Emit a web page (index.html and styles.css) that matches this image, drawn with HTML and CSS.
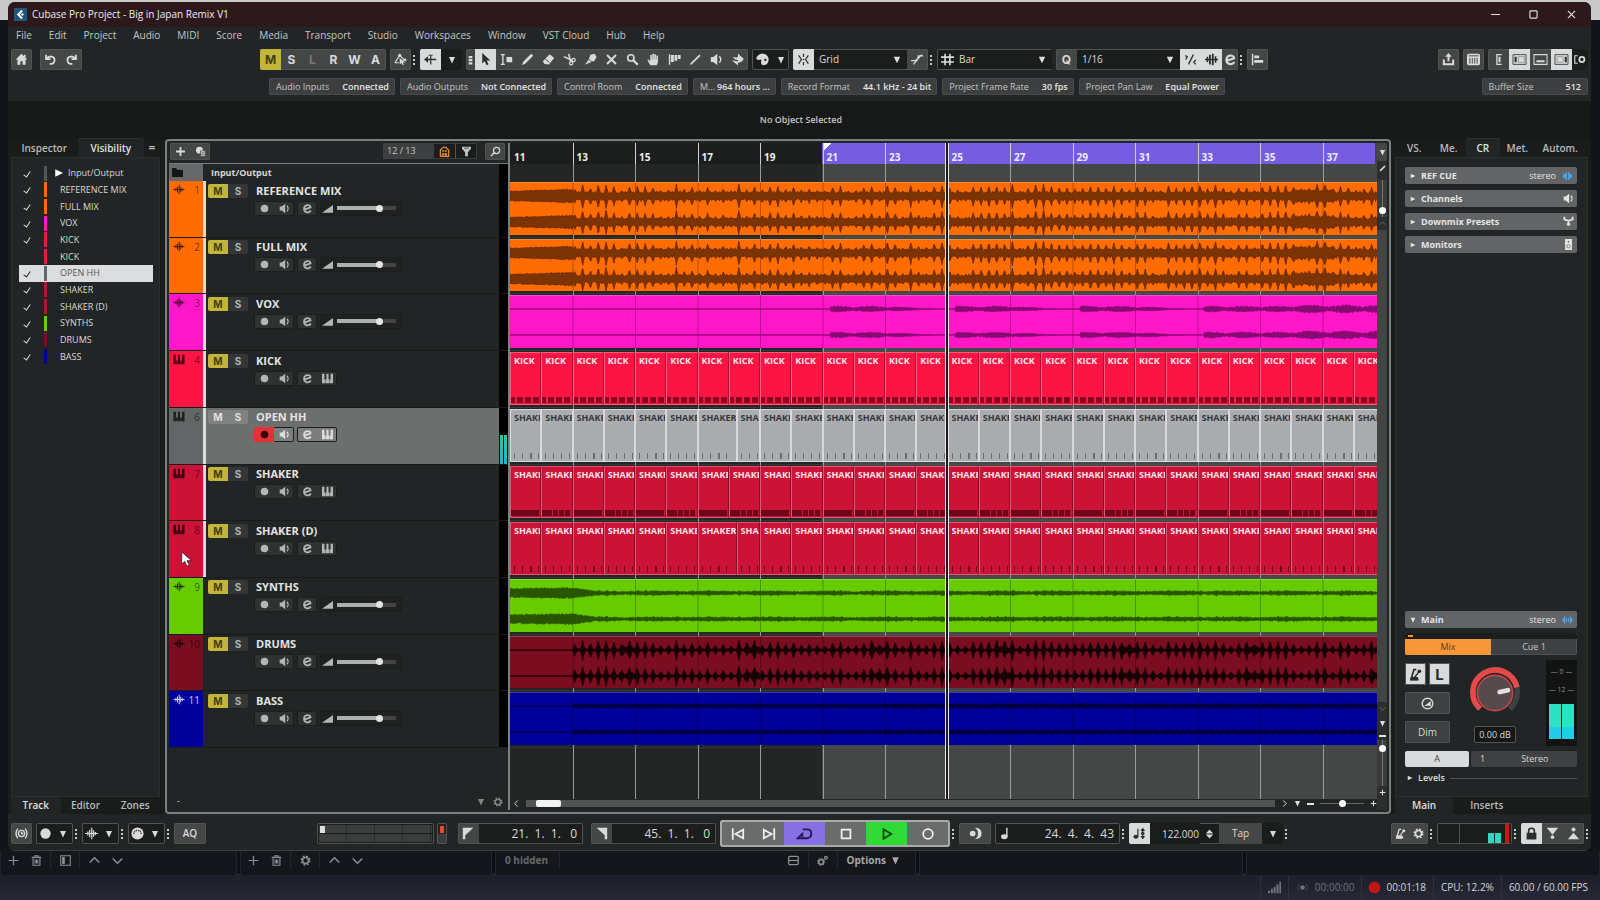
FILE: index.html
```html
<!DOCTYPE html>
<html lang="en">
<head>
<meta charset="utf-8">
<title>Cubase Pro Project - Big in Japan Remix V1</title>
<link rel="stylesheet" href="styles.css">
</head>
<body>
<svg class="sprite" aria-hidden="true">
  <symbol id="home" viewBox="0 0 16 16"><path d="M8 1 0.8 8H3v6.5h3.6V10h2.8v4.500H13V8h2.200L13 5.800V2.300h-2v1.600z"/></symbol>
  <symbol id="undo" viewBox="0 0 16 16"><path d="M2.500 2v5.500H8M3 7c3-4 10-3.500 10 1.500 0 3-2 5-6 5" fill="none" stroke="currentColor" stroke-width="2.200"/></symbol>
  <symbol id="redo" viewBox="0 0 16 16"><path d="M13.500 2v5.500H8M13 7c-3-4-10-3.500-10 1.500 0 3 2 5 6 5" fill="none" stroke="currentColor" stroke-width="2.200"/></symbol>
  <symbol id="autom" viewBox="0 0 16 16"><path d="M1 12 7 3l6 6M1 12h5" fill="none" stroke="currentColor" stroke-width="1.500"/><path d="M7 6v8l2.200-1.800 1.500 3 1.500-.8-1.400-2.700H14z"/><circle cx="7" cy="3" r="2"/><circle cx="13.500" cy="8.500" r="1.800"/></symbol>
  <symbol id="scroll" viewBox="0 0 16 16"><path d="M7.500 2h1.500v12H7.500zM0 8l5-4v3h10v2H5v3zM5.500 2h5.500v1H5.500z"/></symbol>
  <symbol id="handle" viewBox="0 0 8 16"><path d="M1 1.500h6v3.500h-6zM1 6.500h6v3.500h-6zM1 11.500h6V15H1z"/></symbol>
  <symbol id="pointer" viewBox="0 0 16 16"><path d="M4 0v13l3-2.800L9.300 15l2.400-1.100L9.500 9.200H14z"/></symbol>
  <symbol id="range" viewBox="0 0 16 16"><path d="M1 2h5M1 14h5M3.500 2v12" fill="none" stroke="currentColor" stroke-width="1.700"/><path d="M8 5h7v6.500H8z"/></symbol>
  <symbol id="pencil" viewBox="0 0 16 16"><path d="M12.500 1 15 3.500 5.500 13 1 15l2-4.500z"/></symbol>
  <symbol id="eraser" viewBox="0 0 16 16"><path d="M9.500 1.500 15 6l-6.500 8-5.500-.5L1 10z"/><path d="m4 7.500 5 4" stroke="#454747" stroke-width="1.200"/></symbol>
  <symbol id="scissors" viewBox="0 0 16 16"><path d="M1 4.500 11 9M7 1l2.500 10" fill="none" stroke="currentColor" stroke-width="1.900"/><circle cx="13" cy="8.500" r="2" fill="none" stroke="currentColor" stroke-width="1.500"/><circle cx="10" cy="12.700" r="2" fill="none" stroke="currentColor" stroke-width="1.500"/></symbol>
  <symbol id="glue" viewBox="0 0 16 16"><path d="M1 14.500 6 8l3 3z"/><path d="M6 7 8 2l5-1 2.500 4-3 5-3 .5z"/></symbol>
  <symbol id="cross" viewBox="0 0 16 16"><path d="m2.500 2.500 11 11m0-11-11 11" stroke="currentColor" stroke-width="2.500"/></symbol>
  <symbol id="zoom" viewBox="0 0 16 16"><circle cx="6" cy="6" r="3.800" fill="none" stroke="currentColor" stroke-width="2"/><path d="m9 9 5.500 5.500" stroke="currentColor" stroke-width="2.700"/></symbol>
  <symbol id="hand" viewBox="0 0 16 16"><path d="M4 15 .5 9l1.200-1.200L4 10V2.500h2V8h.5V1h2v7H9V1.500h2V8h.5V3h2v8L12 15z"/></symbol>
  <symbol id="comp" viewBox="0 0 16 16"><path d="M1 1.500h1.800v13H1zM3.600 2.500h3.600V11H3.600zM8 2.500h3.400v7H8zM12.200 2.500h3.300v5h-3.300z"/></symbol>
  <symbol id="line" viewBox="0 0 16 16"><path d="M2 14 13.500 2.500" stroke="currentColor" stroke-width="2.200"/></symbol>
  <symbol id="speaker" viewBox="0 0 16 16"><path d="M1 5h3l5-4v14l-5-4H1z"/><path d="M11.500 4q3.500 4 0 8" fill="none" stroke="currentColor" stroke-width="1.700"/></symbol>
  <symbol id="scrub" viewBox="0 0 16 16"><path d="M1 9 8.500 15.500v-3.500q6-1 7-5l-7-6.500v4q-1 2-6.500 0l3 3.500 3.500.5v2z"/></symbol>
  <symbol id="palette" viewBox="0 0 16 16"><path d="M8.500 1C4 1 .5 3.500.5 7.500c2 1.500 4 1 5 .5 1.500 0 1 1 .8 2.500C6 13 7 15 9.500 15c3.500 0 6-3 6-7s-3-7-7-7z"/><circle cx="11.500" cy="8.500" r="1.400" fill="#1b1d1d"/></symbol>
  <symbol id="snap" viewBox="0 0 16 16"><path d="M8 1v4M8 11v4M2 3l3.500 5L2 13M14 3l-3.500 5 3.500 5M7 8h2" fill="none" stroke="currentColor" stroke-width="1.500"/></symbol>
  <symbol id="curve" viewBox="0 0 16 16"><path d="M0 9.500h5q4-1 4-6h6M3 14 13 2" fill="none" stroke="currentColor" stroke-width="1.600"/></symbol>
  <symbol id="grid" viewBox="0 0 16 16"><path d="M5 1v14M11 1v14M0 5h16M0 11h16" stroke="currentColor" stroke-width="2"/></symbol>
  <symbol id="nq" viewBox="0 0 16 16"><path d="M11.500 2 5.500 14M1.500 3l2.500 1.500L2 8M14.500 8.500 12 11l2.500 3" fill="none" stroke="currentColor" stroke-width="1.600"/></symbol>
  <symbol id="wave" viewBox="0 0 16 16"><path d="M0 8h16M3.500 5.500v5M5.800 3.500v9M8.300 1v14M10.500 4v8M12.700 6v4" stroke="currentColor" stroke-width="1.500"/></symbol>
  <symbol id="beats" viewBox="0 0 16 16"><path d="M0 7h2V4.500h2V7h1V2h2.200v5h1.300V1h2.200v6H12V4h2v3h2v2h-2v3h-2V9h-1.300v6H8.500V9H7.200v5H5V9H4v2.500H2V9H0z"/></symbol>
  <symbol id="edit" viewBox="0 0 16 16"><path d="M3.500 9.500 12.500 6.500C12 1.500 3 2 3 8.500c0 6 7.500 6.500 9.800 2.500" fill="none" stroke="currentColor" stroke-width="2.600"/></symbol>
  <symbol id="align" viewBox="0 0 16 16"><path d="M1 1h1.800v14H1zM4 3h6v3.500H4zM4 8.500h11V12H4z"/></symbol>
  <symbol id="share" viewBox="0 0 16 16"><path d="M8 0l4 4.500H9.200V10H6.800V4.500H4zM1 8h2.500v4.500h9V8H15v7H1z"/></symbol>
  <symbol id="mixer" viewBox="0 0 16 16"><rect y="1" width="16" height="14" rx="2"/><path d="M2 3.500h12M3.500 6v7M6.500 6v7M9.500 6v7M12.500 6v7" stroke="#454747" stroke-width="1.200"/></symbol>
  <symbol id="zl" viewBox="0 0 18 16"><path d="M13 2H7v12h6" fill="none" stroke="currentColor" stroke-width="1.600"/><path d="M9 4.500h2.500v7H9z"/></symbol>
  <symbol id="zleft" viewBox="0 0 18 16"><path d="M1 2h16v12H1z" fill="none" stroke="currentColor"/><path d="M3 4.500h2.500v7H3z"/><path d="M7.500 4.500H15v7H7.500z" fill="none" stroke="currentColor" opacity=".4"/></symbol>
  <symbol id="zbottom" viewBox="0 0 18 16"><path d="M1 2h16v12H1z" fill="none" stroke="currentColor" stroke-width="1.300"/><path d="M4 9h10v2.500H4z"/></symbol>
  <symbol id="zright" viewBox="0 0 18 16"><path d="M1 2h16v12H1z" fill="none" stroke="currentColor"/><path d="M13 4.500h2.500v7H13z"/><path d="M3.500 4.500h7.500v7H3.500z" fill="none" stroke="currentColor" opacity=".4"/></symbol>
  <symbol id="zset" viewBox="0 0 16 16"><path d="M5 3H1v10h4" fill="none" stroke="currentColor" stroke-width="1.500"/><circle cx="10.500" cy="8" r="3.400" fill="none" stroke="currentColor" stroke-width="2.400"/></symbol>
  <symbol id="plus" viewBox="0 0 16 16"><path d="M8 1.500v13M1.500 8h13" stroke="currentColor" stroke-width="2.600"/></symbol>
  <symbol id="thinplus" viewBox="0 0 16 16"><path d="M8 1v14M1 8h14" stroke="currentColor" stroke-width="1.700"/></symbol>
  <symbol id="preset" viewBox="0 0 16 16"><circle cx="6.500" cy="6" r="5"/><path d="M8 7h7v8H8z" stroke="#3d3f3f"/><path d="M9 10h5M9 12.500h5" stroke="#3d3f3f"/></symbol>
  <symbol id="vis" viewBox="0 0 16 16"><path d="M2 15V6l4-4h4l4 4v9z" fill="none" stroke="currentColor" stroke-width="1.800"/><path d="M4.500 6h3v2.500h-3zM8.500 6h3v2.500h-3zM4.500 10h3v4h-3zM8.500 10h3v4h-3z"/></symbol>
  <symbol id="filter" viewBox="0 0 16 16"><path d="M1.500 1h13v3L10 9v6H6V9L1.500 4z"/><path d="M4.500 3.200h7" stroke="#1b1d1d"/></symbol>
  <symbol id="search" viewBox="0 0 16 16"><circle cx="9.500" cy="6.500" r="4.500" fill="none" stroke="currentColor" stroke-width="1.800"/><path d="M6.500 9.500 1.500 14.500" stroke="currentColor" stroke-width="2"/></symbol>
  <symbol id="folder" viewBox="0 0 16 16"><path d="M0 3q0-1.500 1.500-1.500H6L7.500 4h7Q16 4 16 5.500v9H0z"/></symbol>
  <symbol id="keys" viewBox="0 0 16 16"><path d="M0 1h3.500v8.500H5V15H0zM5.600 9.500H6.500V1h3v8.500h.9V15H5.600zM16 1h-3.500v8.500H11V15h5z"/></symbol>
  <symbol id="dot" viewBox="0 0 16 16"><circle cx="8" cy="8" r="5.500"/></symbol>
  <symbol id="ramp" viewBox="0 0 16 16"><path d="M0 14 16 3v11z"/></symbol>
  <symbol id="down" viewBox="0 0 16 16"><path d="M2 2h12L8 15z"/></symbol>
  <symbol id="right" viewBox="0 0 16 16"><path d="M2 2v12L14.500 8z"/></symbol>
  <symbol id="gear" viewBox="0 0 16 16"><circle cx="8" cy="8" r="4.300" fill="none" stroke="currentColor" stroke-width="2.200"/><circle cx="8" cy="8" r="6.300" fill="none" stroke="currentColor" stroke-width="2" stroke-dasharray="2.800 2.150"/></symbol>
  <symbol id="stereo" viewBox="0 0 18 16"><path d="M2 5h2l4-4v14l-4-4H2zM16 5h-2l-4-4v14l4-4h2z"/></symbol>
  <symbol id="arrows" viewBox="0 0 18 16"><path d="M5.500 1v14L0 8zM12.500 1v14L18 8zM6.500 5H8.300v6H6.500zM9.700 5h1.800v6H9.700z"/></symbol>
  <symbol id="downmix" viewBox="0 0 16 16"><path d="M2 1v4l6 2 6-2V1M8 7v7M5.500 12h5" fill="none" stroke="currentColor" stroke-width="2.600"/></symbol>
  <symbol id="monitor" viewBox="0 0 16 16"><path d="M3 0h10v16H3z"/><circle cx="8" cy="10.500" r="2.500" fill="none" stroke="#555"/><circle cx="8" cy="4" r="1.200" fill="#555"/></symbol>
  <symbol id="metro" viewBox="0 0 16 16"><path d="M9 2H6L2.500 14.500H11" fill="none" stroke="currentColor" stroke-width="2"/><path d="M2 11h9l1 4H1.500z"/><path d="M6.500 12 13.500 3" stroke="currentColor" stroke-width="1.700"/><circle cx="12.800" cy="4" r="2.200"/></symbol>
  <symbol id="ref" viewBox="0 0 16 16"><circle cx="8" cy="8" r="6.500" fill="none" stroke="currentColor" stroke-width="1.800"/><path d="m4 11 8-6v6z"/></symbol>
  <symbol id="lock" viewBox="0 0 16 16"><path d="M2 7h12v8.500H2z"/><path d="M4.500 7.500V4.500a3.500 3 0 0 1 7 0v3" fill="none" stroke="currentColor" stroke-width="2"/></symbol>
  <symbol id="inp" viewBox="0 0 16 16"><path d="M1 1h14L8 9.500z"/><circle cx="8" cy="12.500" r="2.200"/></symbol>
  <symbol id="outp" viewBox="0 0 16 16"><path d="M1 15h14L8 7z"/><circle cx="8" cy="3" r="2.500"/></symbol>
  <symbol id="retro" viewBox="0 0 16 16"><circle cx="8" cy="8" r="3.800" fill="none" stroke="currentColor" stroke-width="1.700"/><path d="M8 6v2h2M3.500 2Q-1 8 3.500 14M12.500 2q4.500 6 0 12" fill="none" stroke="currentColor" stroke-width="1.700"/></symbol>
  <symbol id="midi" viewBox="0 0 16 16"><circle cx="8" cy="8" r="7.500"/><path d="M3.500 8.500Q4 4 8 4t4.500 4.500" fill="none" stroke="#1b1d1d" stroke-width="1.500" stroke-dasharray="1.500 1"/></symbol>
  <symbol id="flagl" viewBox="0 0 16 16"><path d="M1 1h13L4 10v5H1z"/></symbol>
  <symbol id="flagr" viewBox="0 0 16 16"><path d="M15 1H2l10 9v5h3z"/></symbol>
  <symbol id="tostart" viewBox="0 0 16 16"><path d="M2 1.500v13M14 3v10L5 8z" fill="none" stroke="currentColor" stroke-width="2"/></symbol>
  <symbol id="toend" viewBox="0 0 16 16"><path d="M14 1.500v13M2 3v10l9-5z" fill="none" stroke="currentColor" stroke-width="2"/></symbol>
  <symbol id="cycle" viewBox="0 0 20 16"><path d="M8 2.500h5q5 0 5 5t-5 5.500H2l6-6" fill="none" stroke="currentColor" stroke-width="2.200"/><path d="M8.500 5.500V12L5 10z"/></symbol>
  <symbol id="stop" viewBox="0 0 16 16"><path d="M3 3h10v10H3z" fill="none" stroke="currentColor" stroke-width="2"/></symbol>
  <symbol id="play" viewBox="0 0 16 16"><path d="M4 2.500v11L13 8z" fill="none" stroke="currentColor" stroke-width="2"/></symbol>
  <symbol id="record" viewBox="0 0 16 16"><circle cx="8" cy="8" r="5.500" fill="none" stroke="currentColor" stroke-width="2"/></symbol>
  <symbol id="punch" viewBox="0 0 16 16"><circle cx="4.500" cy="8" r="3.500"/><path d="M7 1q8.500 0 8.500 7T7 15q4-2 4-7T7 1z"/></symbol>
  <symbol id="note" viewBox="0 0 16 16"><ellipse cx="6.500" cy="12" rx="4" ry="3"/><path d="M9.700 12V1" stroke="currentColor" stroke-width="1.700"/></symbol>
  <symbol id="tempo" viewBox="0 0 16 16"><ellipse cx="3.500" cy="12" rx="3" ry="2.500"/><path d="M6 12V2M12 2v12" stroke="currentColor" stroke-width="1.500"/><path d="m9 5 3-4 3 4zM9 11l3 4 3-4zM10 6.500h4v3h-4z"/></symbol>
  <symbol id="updown" viewBox="0 0 16 16"><path d="M8 0l6.500 7h-13zM8 16l6.500-7h-13z"/></symbol>
  <symbol id="trash" viewBox="0 0 16 16"><path d="M1 3.500h14M5.500 3V1h5v2M3 4v11h10V4M6 6.500v6M8 6.500v6M10 6.500v6" fill="none" stroke="currentColor" stroke-width="1.600"/></symbol>
  <symbol id="split" viewBox="0 0 16 16"><path d="M1 1h14v14H1z" fill="none" stroke="currentColor" stroke-width="1.500"/><path d="M3 3h4v10H3z"/></symbol>
  <symbol id="up" viewBox="0 0 16 16"><path d="m1 11 7-7 7 7" fill="none" stroke="currentColor" stroke-width="2.200"/></symbol>
  <symbol id="dn" viewBox="0 0 16 16"><path d="m1 5 7 7 7-7" fill="none" stroke="currentColor" stroke-width="2.200"/></symbol>
  <symbol id="rows" viewBox="0 0 16 16"><rect x="1" y="2" width="14" height="12" rx="2" fill="none" stroke="currentColor" stroke-width="1.800"/><path d="M1 8h14" stroke="currentColor" stroke-width="1.800"/></symbol>
  <symbol id="gears" viewBox="0 0 16 16"><circle cx="6" cy="10" r="3.500" fill="none" stroke="currentColor" stroke-width="2.400"/><circle cx="6" cy="10" r="5.200" fill="none" stroke="currentColor" stroke-width="1.400" stroke-dasharray="2 2.080"/><circle cx="13" cy="4" r="2" fill="none" stroke="currentColor" stroke-width="1.700"/></symbol>
  <symbol id="bars" viewBox="0 0 16 16"><path d="M0 12h2.500v3H0zM3.500 9.500H6V15H3.500zM7 7h2.500v8H7zM10.500 4H13v11h-2.500zM14 1h2v14h-2z"/></symbol>
  <symbol id="live" viewBox="0 0 16 16"><circle cx="8" cy="8" r="2.800"/><path d="M3.500 3.500q-3 4.500 0 9M12.500 3.500q3 4.500 0 9" fill="none" stroke="currentColor" opacity=".5"/></symbol>
  <symbol id="mouse" viewBox="0 0 16 22"><path d="M1 1v16l4-3.500L8 20l3-1.400L8 12.500h6z" fill="#fff" stroke="#222"/></symbol>
</svg>

<div class="window">
  <header class="titlebar">
    <svg class="logo" viewBox="0 0 14 14"><rect width="14" height="14" fill="#1d567e"/><path d="M8 2 3 7l5 5 1.500-1.500L6 7l3.500-3.500z" fill="#fff"/><path d="m9 5.300 1.700 1.700L9 8.700 7.300 7z" fill="#fff"/></svg>
    <h1>Cubase Pro Project - Big in Japan Remix V1</h1>
    <button class="wbtn" aria-label="Minimize"><svg viewBox="0 0 10 10"><path d="M0 5h10"/></svg></button>
    <button class="wbtn" aria-label="Maximize"><svg viewBox="0 0 10 10"><rect x="1" y="1" width="8" height="8" rx="1"/></svg></button>
    <button class="wbtn" aria-label="Close"><svg viewBox="0 0 10 10"><path d="m1 1 8 8m0-8L1 9"/></svg></button>
  </header>
  <nav class="menubar">
    <button>File</button><button>Edit</button><button>Project</button><button>Audio</button><button>MIDI</button><button>Score</button><button>Media</button><button>Transport</button><button>Studio</button><button>Workspaces</button><button>Window</button><button>VST Cloud</button><button>Hub</button><button>Help</button>
  </nav>

  <div class="toolbar">
    <div class="tb-left">
      <div class="group"><button aria-label="Home"><svg><use href="#home"/></svg></button></div>
      <div class="group"><button aria-label="Undo"><svg><use href="#undo"/></svg></button><button aria-label="Redo"><svg><use href="#redo"/></svg></button></div>
    </div>
    <div class="tb-mid">
      <div class="group letters"><button class="mute">M</button><button>S</button><button class="dim">L</button><button>R</button><button>W</button><button>A</button></div>
      <div class="group"><button aria-label="Automation panel"><svg><use href="#autom"/></svg></button></div><i class="dots"></i>
      <div class="group"><button class="on" aria-label="Auto-scroll"><svg><use href="#scroll"/></svg></button><button class="well" aria-label="Auto-scroll options"><svg class="sm"><use href="#down"/></svg></button></div>
      <div class="group tools"><svg class="handle"><use href="#handle"/></svg><button class="on" aria-label="Object selection"><svg><use href="#pointer"/></svg></button><button aria-label="Range"><svg><use href="#range"/></svg></button><button aria-label="Draw"><svg><use href="#pencil"/></svg></button><button aria-label="Erase"><svg><use href="#eraser"/></svg></button><button aria-label="Split"><svg><use href="#scissors"/></svg></button><button aria-label="Glue"><svg><use href="#glue"/></svg></button><button aria-label="Mute"><svg><use href="#cross"/></svg></button><button aria-label="Zoom"><svg><use href="#zoom"/></svg></button><button aria-label="Hand"><svg><use href="#hand"/></svg></button><button aria-label="Comp"><svg><use href="#comp"/></svg></button><button aria-label="Line"><svg><use href="#line"/></svg></button><button aria-label="Play"><svg><use href="#speaker"/></svg></button><button aria-label="Scrub"><svg><use href="#scrub"/></svg></button></div>
      <div class="group well colour"><button aria-label="Colour"><svg><use href="#palette"/></svg></button><button class="slim" aria-label="Colour menu"><svg class="sm"><use href="#down"/></svg></button></div>
      <div class="group snap"><button class="on" aria-label="Snap"><svg><use href="#snap"/></svg></button><select class="w93" aria-label="Snap type"><option>Grid</option></select><button aria-label="Zero crossings"><svg><use href="#curve"/></svg></button></div><i class="dots"></i>
      <div class="group well gridtype"><svg><use href="#grid"/></svg><select class="w98" aria-label="Grid type"><option>Bar</option></select></div>
      <div class="group"><button class="qbtn">Q</button><select class="w103" aria-label="Quantize preset"><option>1/16</option></select><button class="on" aria-label="Soft quantize"><svg><use href="#nq"/></svg></button><button class="on" aria-label="AudioWarp quantize"><svg><use href="#beats"/></svg></button><button class="slim" aria-label="Quantize panel"><svg><use href="#edit"/></svg></button></div><i class="dots"></i>
      <div class="group"><button aria-label="Align"><svg><use href="#align"/></svg></button></div>
    </div>
    <div class="tb-right">
      <div class="group"><button aria-label="Export"><svg><use href="#share"/></svg></button></div>
      <div class="group"><button aria-label="MixConsole"><svg><use href="#mixer"/></svg></button></div>
      <div class="group zones"><button aria-label="Left zone"><svg><use href="#zl"/></svg></button><button class="on" aria-label="Inspector zone"><svg><use href="#zleft"/></svg></button><button aria-label="Lower zone"><svg><use href="#zbottom"/></svg></button><button class="on" aria-label="Right zone"><svg><use href="#zright"/></svg></button><button class="well slim" aria-label="Window layout"><svg><use href="#zset"/></svg></button></div>
    </div>
  </div>

  <div class="status">
    <div class="pill"><span>Audio Inputs</span><b>Connected</b></div>
    <div class="pill"><span>Audio Outputs</span><b>Not Connected</b></div>
    <div class="pill"><span>Control Room</span><b>Connected</b></div>
    <div class="pill close"><span>M...</span><b>964 hours ...</b></div>
    <div class="pill"><span>Record Format</span><b>44.1 kHz - 24 bit</b></div>
    <div class="pill"><span>Project Frame Rate</span><b>30 fps</b></div>
    <div class="pill"><span>Project Pan Law</span><b>Equal Power</b></div>
    <div class="pill last"><span>Buffer Size</span><b>512</b></div>
  </div>
  <div class="info">No Object Selected</div>

  <main class="main">
    <aside class="left">
      <div class="tabs"><button>Inspector</button><button class="active">Visibility</button><button class="menu" aria-label="Panel menu">=</button></div>
      <div class="pane"><ul class="vislist" id="vislist"></ul></div>
      <div class="tabs bottom"><button class="active">Track</button><button>Editor</button><button>Zones</button></div>
    </aside>

    <section class="project">
      <div class="tracklist">
        <div class="tl-head">
          <div class="group"><button aria-label="Add track"><svg><use href="#plus"/></svg></button><button aria-label="Track preset"><svg><use href="#preset"/></svg></button></div>
          <div class="count"><span>12 / 13</span><button class="orange" aria-label="Visibility agent"><svg><use href="#vis"/></svg></button><button aria-label="Filter"><svg><use href="#filter"/></svg></button></div>
          <div class="group"><button aria-label="Find track"><svg><use href="#search"/></svg></button></div>
        </div>
        <div class="folder"><span class="ficon"><svg><use href="#folder"/></svg></span><b>Input/Output</b></div>
        <div class="tracks" id="tracks"></div>
        <div class="tl-foot"><span>-</span><svg class="sm"><use href="#down"/></svg><svg><use href="#gear"/></svg></div>
      </div>
      <div class="divider"></div>
      <div class="timeline">
        <div class="canvas" id="canvas">
          <div class="gridlines" id="gridlines"></div>
          <div class="ruler" id="ruler"></div>
          <div class="lanes" id="lanes"></div>
          <div class="playhead"></div>
        </div>
        <div class="hscroll"><svg class="chev"><use href="#up"/></svg><div class="rail"><div class="thumb"></div></div><svg class="chev r"><use href="#up"/></svg><svg class="tiny"><use href="#down"/></svg><span class="minus"></span><input type="range" value="50" aria-label="Horizontal zoom"><svg class="tiny"><use href="#plus"/></svg></div>
      </div>
      <div class="vscroll">
        <button class="rulerbtn" aria-label="Ruler format"><svg><use href="#down"/></svg></button>
        <svg class="pen"><use href="#pencil"/></svg>
        <div class="vslide low"><i></i></div>
        <svg class="faint"><use href="#up"/></svg>
        <div class="vrail"></div>
        <svg class="faint"><use href="#dn"/></svg>
        <svg class="tri"><use href="#down"/></svg>
        <span class="minus"></span>
        <div class="vslide high"><i></i></div>
        <svg><use href="#plus"/></svg>
      </div>
    </section>

    <aside class="right">
      <div class="tabs"><button>VS.</button><button>Me.</button><button class="active">CR</button><button>Met.</button><button>Autom.</button></div>
      <div class="pane">
        <div class="sects">
          <button class="sect"><svg><use href="#right"/></svg><b>REF CUE</b><span>stereo</span><svg class="blue"><use href="#stereo"/></svg></button>
          <button class="sect"><svg><use href="#right"/></svg><b>Channels</b><svg class="big"><use href="#speaker"/></svg></button>
          <button class="sect"><svg><use href="#right"/></svg><b>Downmix Presets</b><svg class="big"><use href="#downmix"/></svg></button>
          <button class="sect"><svg><use href="#right"/></svg><b>Monitors</b><svg class="big"><use href="#monitor"/></svg></button>
        </div>
        <button class="sect"><svg><use href="#down"/></svg><b>Main</b><span>stereo</span><svg class="blue"><use href="#arrows"/></svg></button>
        <div class="mix"><div class="mixled"></div><button class="active">Mix</button><button>Cue 1</button></div>
        <div class="ctrl">
          <div class="btns">
            <button class="lit" aria-label="Metronome"><svg><use href="#metro"/></svg></button><button class="lit ell">L</button>
            <button class="wide" aria-label="Reference level"><svg><use href="#ref"/></svg></button>
            <button class="wide">Dim</button>
          </div>
          <div class="knob">
            <svg viewBox="0 0 56 56"><path d="M12 45A24 24 0 1 1 44 45" fill="none" stroke="#3b4242" stroke-width="6"/><path d="M12 45A24 24 0 1 1 51.600 22" fill="none" stroke="#e5494a" stroke-width="6"/><circle cx="28" cy="28" r="19" fill="#554a4c" stroke="#c9424b" stroke-width="1.800"/><path d="m33 27 9-2" stroke="#e3dfdf" stroke-width="5" stroke-linecap="round"/></svg>
            <input class="db" value="0.00 dB" aria-label="Level">
          </div>
          <div class="meter"><span>— 0 —</span><span>— 12 —</span><div class="cols"><i></i><i></i></div></div>
        </div>
        <div class="outs"><button class="a">A</button><button class="st"><span>1</span><span>Stereo</span></button></div>
        <div class="levels"><svg><use href="#right"/></svg><b>Levels</b><hr></div>
      </div>
      <div class="tabs bottom"><button class="active">Main</button><button>Inserts</button></div>
    </aside>
  </main>

  <footer class="transport">
    <div class="group"><button aria-label="Retrospective record"><svg><use href="#retro"/></svg></button></div>
    <div class="group well combo"><button aria-label="Record mode"><svg class="lg"><use href="#dot"/></svg></button><button aria-label="Record mode menu"><svg class="sm"><use href="#down"/></svg></button></div><i class="dots"></i>
    <div class="group well combo"><button aria-label="Audio record mode"><svg><use href="#wave"/></svg></button><button aria-label="Audio record menu"><svg class="sm"><use href="#down"/></svg></button></div><i class="dots"></i>
    <div class="group well combo"><button aria-label="MIDI record mode"><svg><use href="#midi"/></svg></button><button aria-label="MIDI record menu"><svg class="sm"><use href="#down"/></svg></button></div><i class="dots"></i>
    <div class="group aq"><button>AQ</button></div>
    <div class="perf"><div class="perfgrid"><i></i></div></div>
    <div class="clip"><i></i></div>
    <div class="group loc first"><button aria-label="Go to left locator"><svg><use href="#flagl"/></svg></button><input value="21.  1.  1.   0" aria-label="Left locator"></div>
    <div class="group loc"><button aria-label="Go to right locator"><svg><use href="#flagr"/></svg></button><input value="45.  1.  1.   0" aria-label="Right locator"></div>
    <div class="playbar"><button aria-label="Previous"><svg><use href="#tostart"/></svg></button><button aria-label="Next"><svg><use href="#toend"/></svg></button><button class="cyc" aria-label="Cycle"><svg><use href="#cycle"/></svg></button><button aria-label="Stop"><svg><use href="#stop"/></svg></button><button class="go" aria-label="Play"><svg><use href="#play"/></svg></button><button aria-label="Record"><svg><use href="#record"/></svg></button></div><i class="dots"></i>
    <div class="group punch"><button aria-label="Punch"><svg><use href="#punch"/></svg></button></div>
    <div class="group time"><svg><use href="#note"/></svg><input value="24.  4.  4.  43" aria-label="Primary time"></div><i class="dots"></i>
    <div class="group tempo"><button class="on" aria-label="Tempo track"><svg><use href="#tempo"/></svg></button><input value="122.000" aria-label="Tempo"><svg class="ud"><use href="#updown"/></svg><button class="tap">Tap</button><button class="well" aria-label="Tempo menu"><svg class="sm"><use href="#down"/></svg></button></div><i class="dots"></i>
    <div class="tr-right">
      <div class="group click"><button aria-label="Metronome click"><svg><use href="#metro"/></svg></button><button aria-label="Metronome setup"><svg><use href="#gear"/></svg></button></div><i class="dots"></i>
      <div class="outmeter"><i class="g"></i><i class="g"></i><i class="r"></i></div><i class="dots"></i>
      <div class="group"><button class="on" aria-label="Lock"><svg><use href="#lock"/></svg></button><button aria-label="Input"><svg><use href="#inp"/></svg></button><button aria-label="Output"><svg><use href="#outp"/></svg></button></div><i class="dots"></i>
    </div>
  </footer>
  <svg class="mouse"><use href="#mouse"/></svg>
</div>

<div class="docks">
  <div><button aria-label="Add scene"><svg><use href="#thinplus"/></svg></button><button aria-label="Remove scene"><svg><use href="#trash"/></svg></button><hr><button aria-label="Scene filters"><svg><use href="#split"/></svg></button><hr><button aria-label="Move scene up"><svg><use href="#up"/></svg></button><button aria-label="Move scene down"><svg><use href="#dn"/></svg></button></div>
  <div><button aria-label="Add source"><svg><use href="#thinplus"/></svg></button><button aria-label="Remove source"><svg><use href="#trash"/></svg></button><hr><button aria-label="Source properties"><svg><use href="#gear"/></svg></button><hr><button aria-label="Move source up"><svg><use href="#up"/></svg></button><button aria-label="Move source down"><svg><use href="#dn"/></svg></button></div>
  <div><span class="hid">0 hidden</span><hr><button class="push" aria-label="Mixer layout"><svg><use href="#rows"/></svg></button><hr><button aria-label="Audio settings"><svg><use href="#gears"/></svg></button><hr><button class="opt">Options<svg class="sm"><use href="#down"/></svg></button></div>
  <div></div>
  <div></div>
</div>
<div class="obs">
  <span class="off"><svg><use href="#bars"/></svg></span>
  <span class="off"><svg><use href="#live"/></svg>00:00:00</span>
  <span><svg class="rec"><use href="#dot"/></svg>00:01:18</span>
  <span>CPU: 12.2%</span>
  <span>60.00 / 60.00 FPS</span>
</div>
<script src="app.js"></script>
</body>
</html>
```

FILE: styles.css
```css
* { box-sizing: border-box; }
:root {
  --panel: #222526;
  --btn: #454747;
  --well: #1b1d1d;
  --lit: #d9dadb;
  --edge: #505253;
  --text: #c4c6c6;
  --lanes: 567px;
}
body {
  margin: 0;
  min-height: 100vh;
  display: flex;
  flex-direction: column;
  font: 9px/1.3 "Open Sans", "Noto Sans", sans-serif;
  color: var(--text);
  background: linear-gradient(#c9c9c9 20px, #13141a 20px);
}
.sprite { position: absolute; width: 0; height: 0; }
button, input, select { font: inherit; color: inherit; border: 0; padding: 0; margin: 0; background: none; border-radius: 0; min-width: 0; }
button { display: flex; align-items: center; justify-content: center; }
svg { fill: currentColor; flex: none; width: 13px; height: 13px; }
svg.sm { width: 8px; height: 8px; }
svg.lg { width: 15px; height: 15px; }
h1 { margin: 0; font-weight: 400; }

.window {
  position: relative;
  flex: 1;
  display: flex;
  flex-direction: column;
  margin: 2px 9px 0 8px;
  background: var(--panel);
  border-radius: 7px;
  overflow: hidden;
}
.titlebar { height: 25px; display: flex; align-items: center; gap: 5px; padding: 0 3px 0 6px; background: #2d181c; color: #f0eeee; }
.titlebar h1 { flex: 1; font-size: 10px; }
.logo { width: 13px; height: 13px; }
.wbtn { width: 33px; height: 25px; }
.wbtn svg { width: 9px; height: 9px; fill: none; stroke: #ddd; stroke-width: 1.3; }
.menubar { height: 19px; display: flex; gap: 17px; padding: 0 8px; font-size: 10px; }
.menubar button { height: 16px; }

.toolbar { height: 27px; display: grid; grid-template-columns: 249px 1fr auto; padding: 3px 3px; }
.tb-left, .tb-mid, .tb-right { display: flex; }
.tb-left { gap: 8px; }
.tb-mid { gap: 4px; }
.tb-right { gap: 4px; }
.group { display: flex; align-items: center; height: 21px; background: var(--btn); border-radius: 2px; box-shadow: inset 0 0 0 1px var(--edge); color: var(--lit); overflow: hidden; flex: none; }
.group button { width: 21px; height: 21px; }
.group .on { background: var(--lit); color: #2c2e2e; }
.group.well, .group .well { background: var(--well); }
.group button.slim { width: 16px; }
.letters { font: 700 12px Inter, sans-serif; }
.letters .mute { background: #c3b539; color: #45400f; }
.letters .dim { color: #777; }
.dots { flex: none; width: 2px; height: 10px; margin: 6px 1px 0 -2px; background: repeating-linear-gradient(#c8c8c8 0 2px, transparent 2px 4px); }
.tools .handle { width: 5px; height: 10px; margin: 0 2px; }
.colour { width: 37px; }
select { appearance: none; height: 19px; padding-left: 5px; font-size: 10px; background: var(--well) url("data:image/svg+xml,%3Csvg xmlns='http://www.w3.org/2000/svg' viewBox='0 0 10 10'%3E%3Cpath d='M1 1h8L5 9z' fill='%23ddd'/%3E%3C/svg%3E") no-repeat right 6px center / 8px 8px; }
.w93 { width: 93px; }
.w98 { width: 98px; }
.w103 { width: 103px; }
.gridtype { padding-left: 4px; }
.group .qbtn { font: 700 12px Inter, sans-serif; }
.zones svg { width: 15px; }
.zones .slim svg { width: 12px; }

.status { height: 28px; display: flex; gap: 5px; padding: 5px 3px 0 261px; }
.pill { height: 17px; display: flex; align-items: center; gap: 13px; padding: 0 6px 0 7px; background: #3c3e3f; border-radius: 2px; box-shadow: inset 0 0 0 1px #484a4b; font-size: 9px; white-space: nowrap; }
.pill b { font-weight: 600; color: #e4e5e5; }
.pill.close { gap: 2px; }
.pill.last { margin-left: auto; gap: 32px; padding-right: 7px; }
.info { height: 38px; padding: 0 0 1px 3px; display: flex; align-items: center; justify-content: center; background: #171818; font-weight: 600; font-size: 9px; }

.main { flex: 1; display: grid; grid-template-columns: 154px 1fr 197px; padding: 0 3px; background: #1a1c1c; }
.left, .right { display: flex; flex-direction: column; }
.left { padding-right: 5px; }
.right { padding-left: 4px; }
.tabs { display: flex; height: 18px; font-size: 10px; font-weight: 600; color: #b9bbbb; }
.tabs .active { background: var(--panel); border-radius: 3px 3px 0 0; color: #dfe0e0; box-shadow: 0 -1px 0 #303333; }
.tabs.bottom .active { border-radius: 0 0 3px 3px; box-shadow: none; }
.tabs.bottom { height: 17px; }
.left .tabs button { flex: 1 1 0; padding: 0; }
.left .tabs .menu { flex: 0 0 16px; font-size: 12px; }
.pane { flex: 1; background: var(--panel); box-shadow: inset 0 0 0 1px #2c2f30; }
.vislist { list-style: none; margin: 0; padding: 8px 7px 0 8px; display: grid; grid-auto-rows: 1fr; height: 208px; font-size: 9px; }
.vislist label { display: flex; align-items: center; height: 100%; color: #d8d9d9; }
.vislist input { appearance: none; width: 10px; height: 10px; margin: 0 13px 0 3px; display: grid; place-items: center; }
.vislist input:checked::before { content: ""; width: 3px; height: 6px; border: solid #e4e4e4; border-width: 0 1px 1px 0; transform: rotate(35deg); }
.vislist .bar { width: 3px; height: 15px; margin: 0 13px 0 -1px; }
.vislist svg { width: 10px; height: 12px; margin: 0 4px 0 -6px; color: #fff; }
.vislist .sel { background: #dcddde; color: #555; }
.vislist .sel input:checked::before { border-color: #222; }

.project { display: grid; grid-template-columns: 339px 2px 1fr 10px; padding: 2px; border: 2px solid #7c7f7f; border-radius: 4px; background: var(--panel); min-width: 0; }
.tracklist { display: flex; flex-direction: column; }
.tl-head { height: 21px; display: flex; gap: 8px; padding: 0 3px 0 1px; border-bottom: 1px solid #77797a; }
.tl-head .group { height: 17px; }
.tl-head .group button { height: 17px; width: 20px; }
.tl-head svg { width: 11px; height: 11px; }
.count { display: flex; margin-left: auto; width: 94px; height: 16px; background: var(--well); box-shadow: inset 0 0 0 1px #3b3d3d; }
.count span { width: 51px; padding: 1px 4px; background: #3d3f40; font-size: 9px; line-height: 14px; }
.count button { flex: 1; }
.count .orange { color: #e08a33; border-right: 1px solid #7a4a1a; }
.folder { height: 17px; display: grid; grid-template-columns: 34px 1fr 9px; align-items: center; }
.folder::after { content: ""; height: 17px; background: #000; }
.folder b { padding-left: 8px; font-weight: 700; font-size: 9px; color: #d5d6d6; }
.ficon { height: 17px; padding: 3px; background: #666969; color: #151616; }
.ficon svg { width: 11px; height: 11px; }
.tracks { height: var(--lanes); display: grid; grid-auto-rows: 1fr; }
.track { display: grid; grid-template-columns: 34px 3px 1fr 9px; border-bottom: 1px solid #191b1b; }
.strip { display: flex; justify-content: space-between; align-items: flex-start; padding: 3px 3px 0 4px; background: var(--c); font-size: 10px; line-height: 12px; color: rgba(0, 0, 0, .55); }
.strip svg { width: 12px; height: 11px; color: rgba(0, 0, 0, .7); }
.strip.inv, .strip.inv svg { color: #c8c8ff; }
.mark.in { background: #dcdcdf; }
.track.sel .body { background: #6d6f6f; }
.body { display: grid; grid-template-columns: 40px 1fr; grid-template-rows: 19px 16px; column-gap: 8px; align-content: start; padding-left: 2px; }
.ms { display: flex; align-self: center; height: 14px; background: #333637; border-radius: 2px; font: 700 10px Inter, sans-serif; color: #b4b6b6; }
.ms button { flex: 1; }
.ms .m { background: #c3b539; color: #45400f; border-radius: 2px 0 0 2px; }
.sel .ms, .sel .ms .m { background: #808282; color: #e0e0e0; }
.name { align-self: center; font-size: 11px; line-height: 14px; font-weight: 700; color: #e3e4e4; white-space: nowrap; }
.row { grid-column: 2; display: flex; gap: 3px; height: 15px; margin-left: -2px; align-self: center; color: #b4b6b6; }
.row > span { display: flex; align-items: center; background: #2f3233; border-radius: 2px; box-shadow: inset 0 0 0 1px #1c1e1e; }
.row button { width: 20px; height: 15px; }
.row svg { width: 11px; height: 11px; }
.row .fader { width: 82px; background: #1f2122; padding-left: 2px; gap: 4px; }
.sel .row { color: #dcdcdc; }
.sel .row > span { background: #7c7e7e; }
.sel .row .rec { background: #e33136; color: #330508; }
input[type=range] { appearance: none; height: 8px; background: linear-gradient(#aeb0b0, #aeb0b0) left center / 75% 4px no-repeat, linear-gradient(#444, #444) center / 100% 4px no-repeat; }
input[type=range]::-webkit-slider-thumb { appearance: none; width: 7px; height: 7px; border-radius: 50%; background: #e4e4e4; }
.fader input { width: 59px; }
.vu { background: #000; display: flex; align-items: flex-end; justify-content: center; gap: 1px; }
.vu i { width: 3px; height: 29px; background: linear-gradient(#2cc7a0, #1fb4d6); }
.tl-foot { flex: 1; display: flex; align-items: flex-end; gap: 8px; padding: 0 5px 3px 8px; color: #888; }
.tl-foot span { flex: 1; color: #ccc; }
.tl-foot svg { width: 10px; height: 10px; }
.tl-foot svg.sm { width: 8px; height: 8px; margin-bottom: 1px; }
.divider { background: #7c7f7f; }

.timeline { display: flex; flex-direction: column; min-width: 0; }
.canvas { position: relative; flex: 1; overflow: hidden; background: linear-gradient(to right, #242626 312px, #454746 312px); }
.gridlines { position: absolute; inset: 0; display: flex; }
.gridlines i { flex: none; border-left: 1px solid #9b9d9d; }
.gridlines i:first-child { border: 0; }
.ruler { position: relative; display: flex; height: 21px; margin-right: 2px; overflow: hidden; background: linear-gradient(to right, #1c1e1e 312px, #755ce0 312px); }
.ruler span { flex: none; padding: 7px 0 0 3px; border-left: 1px solid #cfcfd4; font-size: 10px; line-height: 14px; font-weight: 700; color: #eee; }
.ruler span:first-child { border: 0; padding-left: 4px; }
.ruler .loop { background: linear-gradient(135deg, #fff 5px, transparent 5px); }
.lanes { position: relative; margin-top: 17px; height: var(--lanes); display: grid; grid-auto-rows: 1fr; }
.lane { display: flex; min-width: 0; overflow: hidden; padding: 1px 0 2px; border-bottom: 1px solid rgba(90, 92, 92, .35); }
.audio { width: 100%; background: var(--c); box-shadow: inset 0 1px rgba(255, 255, 255, .22); }
.audio svg { display: block; width: 100%; height: 100%; }
.part { flex: none; overflow: hidden; background: var(--c); border: 1px solid rgba(255, 255, 255, .3); border-right-color: rgba(0, 0, 0, .3); color: #ffe4e8; font-size: 9px; line-height: 16px; font-weight: 700; white-space: nowrap; display: flex; flex-direction: column; justify-content: space-between; }
.part span { overflow: hidden; margin-left: 3px; }
.part svg { width: 100%; height: 10px; }
.part.grey { background: #abacb0; color: #34363a; border-color: #d8d9dc; }
.playhead { position: absolute; top: 0; bottom: 0; left: 435px; width: 4px; background: #1c1c1c; border: solid #e6e6e6; border-width: 0 1px; }
.hscroll { height: 11px; padding: 0 0 2px 3px; display: flex; align-items: center; gap: 6px; color: #ddd; }
.hscroll .chev { width: 7px; height: 7px; transform: rotate(-90deg); }
.hscroll .chev.r { transform: rotate(90deg); }
.hscroll .tiny { width: 7px; height: 7px; }
.rail { flex: 1; height: 7px; background: #535555; }
.thumb { width: 25px; height: 7px; margin-left: 10px; background: #f2f2f2; border-radius: 2px; }
.minus { width: 7px; height: 2px; background: #e4e4e4; }
.hscroll input { width: 44px; background: linear-gradient(#666, #666) center / 100% 1px no-repeat; }
.hscroll input::-webkit-slider-thumb { background: #fff; }
.vscroll { display: flex; flex-direction: column; align-items: center; gap: 3px; background: #2b2d2e; padding-bottom: 14px; color: #ddd; }
.vscroll svg { width: 7px; height: 7px; }
.rulerbtn { width: 10px; height: 18px; background: #454747; border-radius: 2px; }
.vscroll .pen { margin: 1px 0 5px; }
.vslide { width: 10px; height: 37px; background: linear-gradient(#777, #777) center / 1px 100% no-repeat, #3a3c3c; display: flex; justify-content: center; }
.vslide i { width: 7px; height: 7px; margin-top: 5px; border-radius: 50%; background: #fff; }
.vslide.low i { margin-top: 27px; }
.vslide.high { height: 46px; }
.vrail { flex: 1; width: 10px; background: #434545; }
.vscroll .faint { color: #666; }
.vscroll .tri { margin: 5px 0 5px; }

.right .tabs { padding: 0 2px; }
.right .tabs button { flex: 1 1 0; }
.right .tabs button:last-child { flex: 1.500 1 0; }
.right .tabs.bottom { padding: 0; }
.right .tabs.bottom button { flex: none; padding: 0 17px; }
.right .pane { display: flex; flex-direction: column; gap: 5px; padding: 10px 11px 13px 10px; }
.sects { flex: 1; display: flex; flex-direction: column; gap: 6px; }
.sect { width: 100%; height: 17px; gap: 5px; padding: 0 3px 0 5px; justify-content: flex-start; background: #626465; border-radius: 2px; color: #e4e5e5; font-size: 9px; text-align: left; }
.sect b { flex: 1; font-weight: 700; }
.sect svg { width: 6px; height: 6px; }
.sect svg.big { width: 11px; height: 11px; }
.sect svg.blue { width: 13px; height: 10px; color: #4aa5ec; }
.mix { display: grid; grid-template-columns: 1fr 1fr; grid-template-rows: 6px 16px; background: #3e4041; box-shadow: inset 0 0 0 1px #505253; border-radius: 2px; overflow: hidden; }
.mixled { grid-column: 1 / 3; background: linear-gradient(to right, #ef9431, #ef9431) 3px 2px / 5px 2px no-repeat, #1c1e1e; }
.mix .active { background: #f7973a; color: #5e3b12; }
.ctrl { display: grid; grid-template-columns: 45px 1fr 31px; align-items: start; height: 86px; }
.btns { display: grid; grid-template-columns: 21px 21px; grid-auto-rows: 22px; gap: 7px 3px; padding-top: 3px; }
.btns button { background: #3e4041; border-radius: 2px; box-shadow: inset 0 0 0 1px #505253; font-size: 10px; color: #d6d7d7; }
.btns .wide { grid-column: 1 / 3; }
.btns .lit { background: #d9dadb; color: #2a2c2c; }
.btns .ell { font: 700 15px Inter, sans-serif; }
.knob { display: flex; flex-direction: column; align-items: center; gap: 7px; padding: 7px 6px 0 0; }
.knob svg { width: 52px; height: 52px; }
.db { width: 42px; height: 17px; text-align: center; background: #151616; border: 1px solid #555; border-radius: 2px; color: #ddd; }
.meter { height: 86px; background: #121313; padding: 7px 3px 7px; display: flex; flex-direction: column; align-items: center; gap: 8px; font-size: 7px; line-height: 10px; color: #8d8f8f; white-space: nowrap; }
.cols { margin-top: auto; display: flex; gap: 1px; width: 100%; }
.cols i { flex: 1; height: 35px; background: linear-gradient(#2ee0c4 67%, #22cdea 67%); }
.outs { display: grid; grid-template-columns: 64px 1fr; gap: 2px; }
.outs button { height: 16px; background: #3e4041; border-radius: 2px; }
.outs .a { background: #d9dadb; color: #444; }
.outs .st { justify-content: flex-start; padding-left: 9px; gap: 36px; color: #d6d7d7; }
.levels { display: flex; align-items: center; gap: 5px; padding-left: 2px; color: #dcdddd; }
.levels svg { width: 6px; height: 6px; }
.levels b { font-weight: 600; }
.levels hr { flex: 1; border: 0; height: 1px; background: #505253; margin: 0; }

.transport { height: 37px; display: flex; align-items: center; padding: 3px 3px 0; gap: 4px; border-bottom: 1px solid #3b3d3e; }
.transport .dots { margin: 0 1px 0 -2px; }
.transport .combo { width: 37px; }
.transport .combo button { width: 18px; }
.transport .aq { width: 32px; justify-content: center; font-size: 10px; font-weight: 600; }
.perf { width: 117px; height: 21px; margin-left: 107px; padding: 2px; border-radius: 2px; background: #1a1b1b; box-shadow: inset 0 0 0 1px #505253; }
.perfgrid { height: 17px; padding: 1px; background: linear-gradient(#1a1b1b, #1a1b1b) 0 8px / 100% 1px no-repeat, repeating-linear-gradient(to right, #3c3e3e 0 27px, #2c2e2e 27px 28px); }
.perfgrid i { display: block; width: 5px; height: 7px; background: #ddd; }
.clip { width: 10px; height: 21px; margin: 0 7px 0 -1px; padding: 3px; box-shadow: inset 0 0 0 1px #505253; border-radius: 2px; background: linear-gradient(#222 50%, #3c3e3e 50%); }
.clip i { display: block; height: 7px; background: #e8492f; }
.loc { width: 125px; }
.loc.first { margin-right: 4px; }
.group input { flex: 1; height: 19px; padding-right: 5px; background: var(--well); text-align: right; font-size: 12px; margin-right: 1px; }
.playbar { display: flex; flex: none; height: 27px; padding: 2px; box-shadow: inset 0 0 0 2px #a9abab; border-radius: 3px; background: #6a6c6c; color: #f0f0f0; }
.playbar button { width: 31px; height: 23px; }
.playbar button:nth-child(n+3) { width: 41px; }
.playbar svg { width: 14px; height: 14px; }
.playbar .cyc svg { width: 17px; }
.cyc { background: #8770e4; color: #241b52; }
.go { background: #2fd936; color: #10430f; }
.punch { width: 32px; justify-content: center; }
.time { width: 125px; background: var(--well); }
.time svg { margin: 0 4px; }
.tempo input { width: 50px; flex: none; font-size: 10px; height: 21px; margin: 0; padding: 0 1px 0 0; }
.tempo { background: var(--well); }
.tempo .ud { width: 9px; height: 12px; margin: 0 5px; }
.tempo .tap { width: 43px; background: var(--btn); font-size: 10px; }
.tr-right { margin-left: auto; display: flex; align-items: center; gap: 4px; }
.tr-right .dots:last-child { margin-right: 0; }
.click { width: 37px; }
.click svg { width: 11px; }
.group.click button { width: 18px; }
.outmeter { width: 75px; height: 21px; padding: 1px 2px 1px 51px; display: flex; align-items: flex-end; gap: 1px; background: linear-gradient(#505253, #505253) 22px 0 / 1px 100% no-repeat, #1b1d1d; box-shadow: inset 0 0 0 1px #505253; border-radius: 2px; }
.outmeter .g { width: 6px; height: 10px; background: #2ed9c3; }
.outmeter .r { width: 4px; height: 19px; margin-left: 3px; background: #d9110f; }
.mouse { position: absolute; left: 173px; top: 549px; width: 12px; height: 17px; }

.docks { height: 24px; display: grid; grid-template-columns: 237fr 252fr 421fr 324fr 354fr; gap: 3px; padding-bottom: 4px; background: #101117; border-bottom: 1px solid #2b2e38; color: #8c8e93; font-size: 10px; font-weight: 700; }
.docks > div { display: flex; align-items: center; gap: 5px; padding: 0 7px 7px 3px; border: 1px solid #22242c; border-top: 0; border-radius: 0 0 3px 3px; background: #15161c; }
.docks svg { width: 11px; height: 11px; }
.docks button { width: 18px; }
.docks hr { width: 1px; height: 18px; border: 0; margin: 0; background: #24262d; }
.docks .hid { padding: 0 6px; color: #66686d; }
.docks .push { margin-left: auto; }
.docks .opt { width: auto; gap: 5px; padding: 0 8px 0 4px; color: #a5a7ab; }
.docks svg.sm { width: 9px; height: 9px; }
.obs { height: 25px; display: flex; justify-content: flex-end; padding-right: 5px; background: linear-gradient(#1d1f29, #252836); font-size: 10px; color: #d4d5d8; }
.obs span { display: flex; align-items: center; gap: 6px; padding: 0 7px; border-left: 1px solid #2e313d; }
.obs .off { color: #70727b; }
.obs .rec { color: #c11414; width: 17px; height: 17px; margin: 0 -3px; }
```

FILE: app.js
```js
const BAR = 31.25;
const FIRST_BAR = 11;

const tracks = [
  { n: 1, name: 'REFERENCE MIX', c: '#ff6c02', wave: 'mix', mark: true },
  { n: 2, name: 'FULL MIX', c: '#ff6c02', wave: 'mix', mark: true },
  { n: 3, name: 'VOX', c: '#ff17c8', wave: 'vox', mark: true },
  { n: 4, name: 'KICK', c: '#fb1544', midi: 'kick', mark: true },
  { n: 6, name: 'OPEN HH', c: '#636666', midi: 'hat', mark: true, sel: true },
  { n: 7, name: 'SHAKER', c: '#cc1236', midi: 'shaker', mark: true },
  { n: 8, name: 'SHAKER (D)', c: '#cc1236', midi: 'hat', mark: true },
  { n: 9, name: 'SYNTHS', c: '#66cc00', wave: 'synth' },
  { n: 10, name: 'DRUMS', c: '#7a0d1f', wave: 'drums' },
  { n: 11, name: 'BASS', c: '#00009b', wave: 'bass' }
];

const visibility = [
  ['Input/Output', '#555858', true], ['REFERENCE MIX', '#ff6c02', true], ['FULL MIX', '#ff6c02', true],
  ['VOX', '#ff17c8', true], ['KICK', '#e0203f', true], ['KICK', '#e0203f', false],
  ['OPEN HH', '#636666', true], ['SHAKER', '#b01634', true], ['SHAKER (D)', '#b01634', true],
  ['SYNTHS', '#66cc00', true], ['DRUMS', '#7a0d1f', true], ['BASS', '#00009b', true]
];

const icon = id => `<svg aria-hidden="true"><use href="#${id}"/></svg>`;

document.getElementById('vislist').innerHTML = visibility.map(([name, c, on], i) =>
  `<li><label class="${name === 'OPEN HH' ? 'sel' : ''}"><input type="checkbox" ${on ? 'checked' : ''}>` +
  `<i class="bar" style="background:${c}"></i>${i === 0 ? icon('right') : ''}<span>${name}</span></label></li>`).join('');

document.getElementById('tracks').innerHTML = tracks.map(t => `
  <div class="track ${t.sel ? 'sel' : ''}" style="--c:${t.c}">
    <div class="strip ${t.n === 11 ? 'inv' : ''}">${icon(t.wave ? 'wave' : 'keys')}<span>${t.n}</span></div>
    <div class="mark ${t.mark ? 'in' : ''}"></div>
    <div class="body">
      <div class="ms"><button class="m">M</button><button>S</button></div>
      <div class="name">${t.name}</div>
      <div class="row">
        <span><button class="rec" aria-label="Record enable">${icon('dot')}</button><button aria-label="Monitor">${icon('speaker')}</button></span>
        ${t.wave
          ? `<span><button aria-label="Edit">${icon('edit')}</button></span><span class="fader">${icon('ramp')}<input type="range" value="75" aria-label="Volume"></span>`
          : `<span><button aria-label="Edit">${icon('edit')}</button><button aria-label="Instrument">${icon('keys')}</button></span>`}
      </div>
    </div>
    <div class="vu">${t.sel ? '<i></i><i></i>' : ''}</div>
  </div>`).join('');

const width = document.getElementById('canvas').clientWidth;
const bars = Math.ceil(width / BAR);

const cells = Array.from({ length: Math.ceil(bars / 2) }, (_, i) => FIRST_BAR + i * 2);
document.getElementById('gridlines').innerHTML = cells.map(() => `<i style="width:${BAR * 2}px"></i>`).join('');
document.getElementById('ruler').innerHTML = cells.map(n =>
  `<span class="${n === 21 ? 'loop' : ''}" style="width:${BAR * 2}px">${n}</span>`).join('');

function random(seed) {
  let s = seed;
  return () => (s = (s * 16807) % 2147483647) / 2147483647;
}

const hit = (phase, at, w) => Math.max(0, 1 - Math.abs(phase - at) / w) ** 2;

const shapes = {
  mix(t, r, beat, h) {
    if (t < 2) return 4 + t * .9 + r * 1.2;
    const body = t > 25 && t < 26.4 ? 4.4 : 2.5;
    return body + r * 1.2 + hit(beat, .3, .35) * (2 + 7 * h) + hit(beat, .8, .25) * 2 * r;
  },
  vox(t, r) {
    const starts = [10.25, 14.25, 18.25, 22.2];
    const s = starts.filter(v => v <= t).pop();
    if (s === undefined) return .2;
    const p = t - s;
    const end = s > 22 ? 9 : 3.4;
    if (p > end) return .2;
    const fade = s > 22 ? 1 : Math.min(1, (end - p) / 1.8);
    const swell = .5 + 1.3 * Math.abs(Math.sin(p * 2.9 + 1));
    return .2 + fade * (swell + r * 1.1) * (t > 25 ? 1.4 : 1);
  },
  synth(t, r, beat, h) {
    if (t < 2) return 3.4 + r * 1.6 + t * .4;
    if (t < 2.7) return 4.4 - (t - 2) * 4 + r;
    return .7 + r * .9 + Math.abs(Math.sin(t * 1.7)) * .6 + hit(beat, .4, .4) * h;
  },
  drums(t, r, beat, h) {
    if (t < 2) return .2;
    return .6 + r * .7 + hit(beat, .3, .42) * (3.5 + 6 * h) + (Math.floor(t * 4) % 16 > 13 ? 2.500 * r : 0);
  },
  bass(t, r) {
    return t < 2 ? .2 : 1.2 + r * .8 + (t > 12 ? .5 * r : 0);
  }
};

const inks = { mix: '#7c3404', vox: '#870a72', synth: '#2a5500', drums: '#150205', bass: '#00003c' };
const rims = { mix: '#4f1c00' };

function channel(kind, cy, seed) {
  const noise = random(seed);
  const beats = random(77);
  const heights = Array.from({ length: bars * 4 + 8 }, beats);
  const top = [];
  const bottom = [];
  for (let x = 0; x <= width + 1; x += .8) {
    const t = x / BAR;
    const beat = (t * 4) % 1;
    const h = heights[Math.floor(t * 4)];
    const f = shapes[kind];
    top.push(`${x.toFixed(1)} ${(cy - f(t, noise(), beat, h)).toFixed(1)}`);
    bottom.unshift(`${x.toFixed(1)} ${(cy + f(t, noise(), beat, h * 1.15)).toFixed(1)}`);
  }
  return `<path d="M${top.join('L')}L${bottom.join('L')}z" fill="${inks[kind]}" stroke="${rims[kind] || inks[kind]}" stroke-width=".6"/>`;
}

function audioLane(t) {
  const lines = cells.slice(1).map((_, i) => {
    const x = (i + 1) * BAR * 2 + .5;
    return `<path d="M${x} 0V60" stroke="rgba(0,0,0,.28)"/>`;
  }).join('');
  return `<div class="lane"><div class="audio" style="--c:${t.c}"><svg aria-hidden="true">${lines}${channel(t.wave, 14, 311)}${channel(t.wave, 40, 947)}</svg></div></div>`;
}

function notes(kind, alt) {
  const rect = (x, w, h = 6) => `<rect x="${x}" y="${kind === 'hat' ? 2 : 3}" width="${w}" height="${h}"/>`;
  if (kind === 'kick') return [[0, 4], [6, 6], [14, 6], [22, 6]].map(([x, w]) => rect(x, w)).join('');
  if (kind === 'shaker') return alt ? rect(0, 10) + rect(11, 5) + rect(17, 5) + rect(23, 5) : rect(0, 28);
  return [3, 11, 19, 27].map((x, i) => rect(x, i === 2 && !alt ? 2 : 1)).join('');
}

function midiLane(t) {
  const label = t.midi === 'kick' ? 'KICK' : 'SHAKER';
  const ink = { kick: '#8c0520', shaker: '#6d0418', hat: t.sel ? '#6b6d72' : '#6d0418' }[t.midi];
  let html = '';
  for (let i = 0; i < bars; i++) {
    let len = 1;
    if (t.midi === 'hat' && i === 6) len = 1.25;
    if (t.midi === 'hat' && i === 7) len = .75;
    html += `<div class="part ${t.sel ? 'grey' : ''}" style="--c:${t.c};width:${BAR * len}px"><span>${label}</span><svg aria-hidden="true" style="fill:${ink}">${notes(t.midi, i % 2)}</svg></div>`;
  }
  return `<div class="lane">${html}</div>`;
}

document.getElementById('lanes').innerHTML = tracks.map(t => t.wave ? audioLane(t) : midiLane(t)).join('');
```
